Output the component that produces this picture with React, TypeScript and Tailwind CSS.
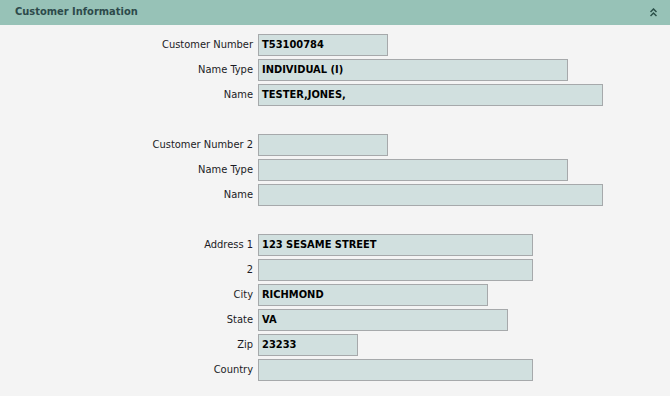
import React from "react";

type Row = { label: string; value: string; w: number } | null;

const rows: Row[] = [
  { label: "Customer Number", value: "T53100784", w: 130 },
  { label: "Name Type", value: "INDIVIDUAL (I)", w: 310 },
  { label: "Name", value: "TESTER,JONES,", w: 345 },
  null,
  { label: "Customer Number 2", value: "", w: 130 },
  { label: "Name Type", value: "", w: 310 },
  { label: "Name", value: "", w: 345 },
  null,
  { label: "Address 1", value: "123 SESAME STREET", w: 275 },
  { label: "2", value: "", w: 275 },
  { label: "City", value: "RICHMOND", w: 230 },
  { label: "State", value: "VA", w: 250 },
  { label: "Zip", value: "23233", w: 100 },
  { label: "Country", value: "", w: 275 },
];

export default function App() {
  return (
    <div
      className="w-[671px] h-[396px] bg-white"
      style={{ fontFamily: '"DejaVu Sans Condensed", "DejaVu Sans", sans-serif' }}
    >
      <div className="w-[670px] h-[396px] bg-[#f4f4f4]">
        <div className="h-[25px] bg-[#97c2b7] flex items-center justify-between pl-[15px] pr-[12px]">
          <span className="text-[11px] font-bold text-[#2d4a4b]">Customer Information</span>
          <svg width="7" height="9" viewBox="0 0 7 9" className="mr-[1px]">
            <path d="M0.5 4 L3.5 1 L6.5 4 M0.5 8 L3.5 5 L6.5 8" stroke="#2b5049" strokeWidth="1.5" fill="none" />
          </svg>
        </div>
        <div className="pt-[9px] flex flex-col gap-[3px]">
          {rows.map((r, i) =>
            r === null ? (
              <div key={i} className="h-[22px]" />
            ) : (
              <div key={i} className="flex items-center h-[22px]">
                <div className="w-[253px] text-right text-[11px] text-[#1b1b24]">{r.label}</div>
                <div
                  className="ml-[5px] h-[22px] bg-[#d1e0df] border border-[#a6a9ab] flex items-center pl-[3px] text-[11px] font-bold text-black"
                  style={{ width: r.w }}
                >
                  {r.value}
                </div>
              </div>
            )
          )}
        </div>
      </div>
    </div>
  );
}
